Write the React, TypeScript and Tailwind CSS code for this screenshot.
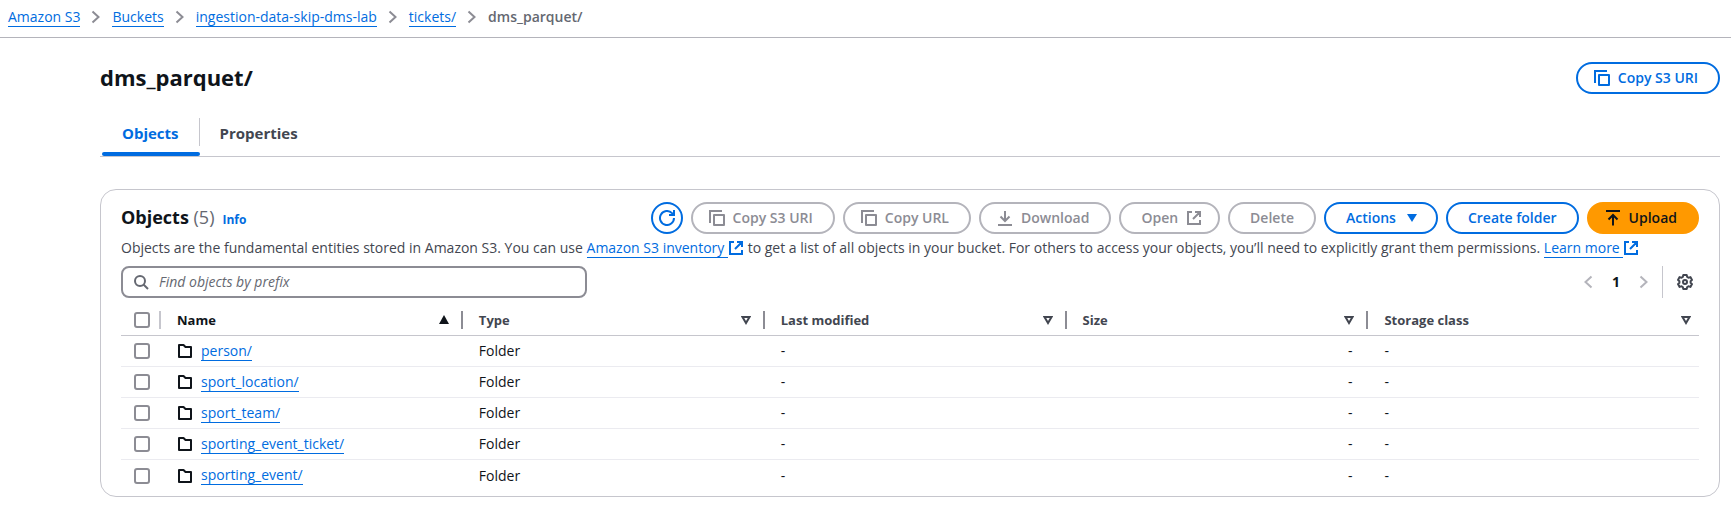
import React from "react";

type IconProps = { className?: string };

const iconBase = "shrink-0 fill-none stroke-current stroke-2";

function Chevron({ className = "" }: IconProps) {
  return (
    <svg viewBox="0 0 16 16" className={`${iconBase} size-4 ${className}`} aria-hidden="true">
      <path d="M4.5 2.5 10.5 8l-6 5.5" />
    </svg>
  );
}

function CopyIcon() {
  return (
    <svg viewBox="0 0 16 16" className={`${iconBase} size-4`} aria-hidden="true">
      <path d="M13 1H1v12" />
      <path d="M5 5h10v10H5z" strokeLinejoin="round" />
    </svg>
  );
}

function RefreshIcon() {
  return (
    <svg viewBox="0 0 16 16" className={`${iconBase} size-4`} aria-hidden="true">
      <path d="M15 8a7 7 0 1 1-2-4.9l1.8 1.9" />
      <path d="M15 0v5h-5" />
    </svg>
  );
}

function DownloadIcon() {
  return (
    <svg viewBox="0 0 16 16" className={`${iconBase} size-4`} aria-hidden="true">
      <path d="M1 15h14M8 1v10M3.5 6.5 8 11l4.5-4.5" />
    </svg>
  );
}

function UploadIcon() {
  return (
    <svg viewBox="0 0 16 16" className={`${iconBase} size-4`} aria-hidden="true">
      <path d="M1 1h14M8 15.5V5M3.5 9.5 8 5l4.5 4.5" />
    </svg>
  );
}

function ExternalIcon({ className = "" }: IconProps) {
  return (
    <svg viewBox="0 0 16 16" className={`${iconBase} inline-block size-4 ${className}`} aria-hidden="true">
      <path d="M6 2H2v12h12v-4M9 2h5v5M14 2 7 9" />
    </svg>
  );
}

function SearchIcon() {
  return (
    <svg viewBox="0 0 16 16" className={`${iconBase} size-4`} aria-hidden="true">
      <circle cx="7" cy="7" r="5" />
      <path d="m15 15-4.5-4.5" />
    </svg>
  );
}

function GearIcon() {
  return (
    <svg viewBox="0 0 16 16" className={`${iconBase} size-4`} aria-hidden="true">
      <path
        strokeLinejoin="round"
        d="M6.3 1h3.4l.5 2 1.2.7 2-.6L15 5.9l-1.4 1.4v1.4l1.4 1.4-1.6 2.8-2-.6-1.2.7-.5 2H6.3l-.5-2-1.2-.7-2 .6L1 10.1l1.4-1.4V7.3L1 5.9l1.6-2.8 2 .6L5.8 3z"
      />
      <circle cx="8" cy="8" r="2" />
    </svg>
  );
}

function FolderIcon() {
  return (
    <svg viewBox="0 0 16 16" className={`${iconBase} size-4`} aria-hidden="true">
      <path strokeLinejoin="round" d="M2 14V2h4.5l2 2H14v10z" />
    </svg>
  );
}

const crumbs = ["Amazon S3", "Buckets", "ingestion-data-skip-dms-lab", "tickets/"];
const columns = ["Name", "Type", "Last modified", "Size", "Storage class"];
const rows = ["person/", "sport_location/", "sport_team/", "sporting_event_ticket/", "sporting_event/"];

const link = "border-b border-[#006ce0] text-[#006ce0]";
const button = "flex h-8 items-center gap-2 rounded-full border-2 font-semibold whitespace-nowrap";
const primary = "border-[#006ce0] text-[#006ce0]";
const disabled = "border-[#b4b4bb] text-[#8c8c94]";
const checkbox = "block size-4 appearance-none rounded-[3px] border-2 border-[#8c8c94] bg-white";

export default function App() {
  return (
    <div className="bg-white font-['Open_Sans','Noto_Sans',sans-serif] text-[14px] leading-5 text-[#0f141a]">
      <nav aria-label="Breadcrumbs" className="border-b border-[#b4b4bb] px-2 pt-[7px] pb-[10px]">
        <ol className="flex items-center">
          {crumbs.map((crumb) => (
            <li key={crumb} className="flex items-center">
              <a href="#" className={`${link} leading-[18px]`}>{crumb}</a>
              <Chevron className="mx-2 text-[#8c8c94]" />
            </li>
          ))}
          <li className="font-semibold text-[#656871]" aria-current="page">dms_parquet/</li>
        </ol>
      </nav>

      <main className="pt-6 pr-[11px] pl-[100px]">
        <header className="flex items-start justify-between">
          <h1 className="text-[22px] leading-[30px] font-bold">dms_parquet/</h1>
          <button type="button" className={`${button} ${primary} pr-5 pl-4`}>
            <CopyIcon />
            Copy S3 URI
          </button>
        </header>

        <div role="tablist" className="mt-5 flex border-b border-[#c6c6cd] text-[15px] font-bold">
          <button type="button" role="tab" aria-selected="true" className="ml-0.5 flex flex-col text-[#006ce0]">
            <span className="mt-1 border-r border-[#c6c6cd] px-5 pt-[5px] pb-[3px]">Objects</span>
            <span className="mt-1.5 h-1 w-full rounded-xs bg-[#006ce0]" />
          </button>
          <button type="button" role="tab" aria-selected="false" className="mb-1 px-5 text-[#424650]">
            Properties
          </button>
        </div>

        <section className="mt-8 rounded-2xl border border-[#c6c6cd] px-5 pt-3 pb-[5px]">
          <div className="flex items-center justify-between">
            <div className="flex items-baseline gap-2">
              <h2 className="text-[18px] font-bold">
                Objects <span className="font-normal text-[#656871]">(5)</span>
              </h2>
              <a href="#" className="text-[12px] font-bold text-[#006ce0]">Info</a>
            </div>
            <div className="flex gap-2">
              <button type="button" aria-label="Refresh" className={`${button} ${primary} w-8 justify-center`}>
                <RefreshIcon />
              </button>
              <button type="button" disabled className={`${button} ${disabled} pr-5 pl-4`}>
                <CopyIcon />
                Copy S3 URI
              </button>
              <button type="button" disabled className={`${button} ${disabled} pr-5 pl-4`}>
                <CopyIcon />
                Copy URL
              </button>
              <button type="button" disabled className={`${button} ${disabled} pr-5 pl-4`}>
                <DownloadIcon />
                Download
              </button>
              <button type="button" disabled className={`${button} ${disabled} pr-4 pl-5`}>
                Open
                <ExternalIcon />
              </button>
              <button type="button" disabled className={`${button} ${disabled} px-5`}>Delete</button>
              <button type="button" className={`${button} ${primary} pr-4 pl-5`}>
                Actions
                <svg viewBox="0 0 16 16" className="size-4 fill-current" aria-hidden="true">
                  <path d="M3 4h10l-5 8z" />
                </svg>
              </button>
              <button type="button" className={`${button} ${primary} px-5`}>Create folder</button>
              <button type="button" className={`${button} border-[#ff9900] bg-[#ff9900] pr-5 pl-4`}>
                <UploadIcon />
                Upload
              </button>
            </div>
          </div>

          <p className="mt-1 text-[#424650]">
            Objects are the fundamental entities stored in Amazon S3. You can use{" "}
            <a href="#" className="text-[#006ce0]"><span className="border-b border-[#006ce0]">Amazon S3 inventory </span><ExternalIcon className="mb-0.5" /></a>{" "}
            to get a list of all objects in your bucket. For others to access your objects, you’ll need to explicitly grant them permissions.{" "}
            <a href="#" className="text-[#006ce0]"><span className="border-b border-[#006ce0]">Learn more </span><ExternalIcon className="mb-0.5" /></a>
          </p>

          <div className="mt-2 flex items-center justify-between">
            <label className="flex h-8 w-[466px] items-center gap-2.5 rounded-lg border-2 border-[#8c8c94] px-2.5 text-[#656871]">
              <SearchIcon />
              <input
                type="search"
                aria-label="Find objects by prefix"
                placeholder="Find objects by prefix"
                className="min-w-0 flex-1 outline-none placeholder:text-[#656871] placeholder:italic"
              />
            </label>
            <div className="flex h-8 items-center">
              <button type="button" aria-label="Previous page" disabled className="text-[#b4b4bb]">
                <Chevron className="rotate-180" />
              </button>
              <button type="button" className="mx-4 font-bold">1</button>
              <button type="button" aria-label="Next page" disabled className="text-[#b4b4bb]">
                <Chevron />
              </button>
              <span className="mr-3.5 ml-2.5 h-8 w-px bg-[#c6c6cd]" />
              <button type="button" aria-label="Preferences" className="pr-1.5 text-[#424650]">
                <GearIcon />
              </button>
            </div>
          </div>

          <table className="mt-1.5 w-full table-fixed border-collapse text-left">
            <colgroup>
              <col className="w-10" />
              <col className="w-[19.13%]" />
              <col className="w-[19.13%]" />
              <col className="w-[19.13%]" />
              <col className="w-[19.13%]" />
              <col />
            </colgroup>
            <thead>
              <tr className="border-b border-[#c6c6cd] text-[13px] text-[#424650]">
                <th className="p-0">
                  <div className="flex h-[31px] items-center justify-between pl-[13px]">
                    <input type="checkbox" aria-label="Select all objects" className={checkbox} />
                    <span className="h-[18px] w-0.5 bg-[#c6c6cd]" />
                  </div>
                </th>
                {columns.map((column, index) => (
                  <th key={column} className="p-0 font-bold">
                    <div className="flex h-[31px] items-center pl-4">
                      <span className={index === 0 ? "flex-1 text-[#0f141a]" : "flex-1"}>{column}</span>
                      {index === 0 ? (
                        <svg viewBox="0 0 10 10" className="mr-3 size-2.5 fill-[#0f141a]" aria-hidden="true">
                          <path d="M5 0l5 9H0z" />
                        </svg>
                      ) : (
                        <svg viewBox="0 0 10 10" className={`${iconBase} size-2.5 ${index === 4 ? "mr-2" : "mr-3"}`} aria-hidden="true">
                          <path d="M1.5 2h7L5 8z" />
                        </svg>
                      )}
                      {index < 4 && <span className="h-[18px] w-0.5 bg-[#8c8c94]" />}
                    </div>
                  </th>
                ))}
              </tr>
            </thead>
            <tbody>
              {rows.map((name) => (
                <tr key={name} className="h-[31px] border-b border-[#ebebf0] last:border-b-0">
                  <td className="p-0 pl-[13px]">
                    <input type="checkbox" aria-label={`Select ${name}`} className={checkbox} />
                  </td>
                  <td className="p-0 pl-4">
                    <div className="flex items-center gap-2">
                      <FolderIcon />
                      <a href="#" className={`${link} leading-[18px]`}>{name}</a>
                    </div>
                  </td>
                  <td className="p-0 pl-4">Folder</td>
                  <td className="p-0 pl-4">-</td>
                  <td className="p-0 pr-4 text-right">-</td>
                  <td className="p-0 pl-4">-</td>
                </tr>
              ))}
            </tbody>
          </table>
        </section>
      </main>
    </div>
  );
}
